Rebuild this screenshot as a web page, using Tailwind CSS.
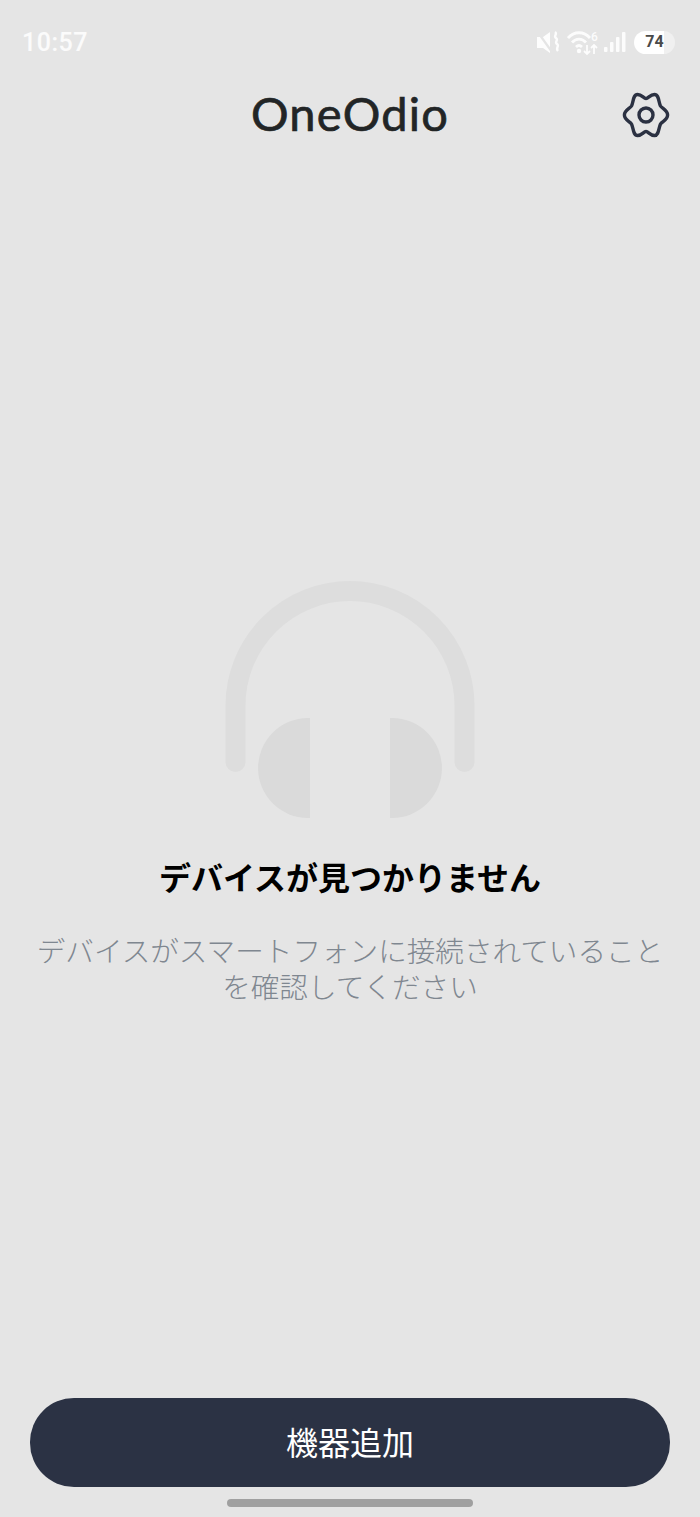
<!DOCTYPE html>
<html lang="ja">
<head>
  <meta charset="UTF-8">
  <title>OneOdio</title>
  <script src="https://cdn.jsdelivr.net/npm/@tailwindcss/browser@4"></script>
</head>
<body class="bg-[#e5e5e5]">
  <div class="w-[700px] h-[1517px] flex flex-col overflow-hidden font-['Roboto','Noto_Sans_CJK_JP',sans-serif]">

    <!-- status bar -->
    <div class="h-[84px] flex items-center justify-between pl-[22px] pr-[25px]">
      <span class="text-[25px] leading-none tracking-[0.5px] font-medium text-white/85">10:57</span>
      <div class="flex items-center">
        <svg width="24" height="24" viewBox="0 0 24 24" class="mr-[7px]">
          <path d="M1 7h6l7-5v21l-7-5H1z" fill="#fff" opacity=".9"/>
          <path d="M1 1l15 21" stroke="#e5e5e5" stroke-width="2.200"/>
          <path d="M19 2c3 2-2 4 1 6s-2 4 1 6-2 4 1 7" fill="none" stroke="#fff" stroke-width="2.400" opacity=".9"/>
        </svg>
        <svg width="32" height="26" viewBox="0 0 32 26" class="mr-[5px]">
          <g fill="none" stroke="#fff" stroke-width="2.800" opacity=".9">
            <path d="M1 9c6-7 16-7 22 0"/>
            <path d="M5 13.500c4-4.500 10-4.500 14 0"/>
            <path d="M9 18c2-2 4-2 6 0"/>
          </g>
          <circle cx="12" cy="22" r="2.200" fill="#fff" opacity=".9"/>
          <path d="M20 16v9m-3-3 3 3 3-3M27 25v-9m-3 3 3-3 3 3" fill="none" stroke="#fff" stroke-width="1.800" opacity=".9"/>
          <text x="24" y="11.500" font-size="12" font-weight="500" font-family="Roboto" fill="#fff" opacity=".9">6</text>
        </svg>
        <svg width="22" height="22" viewBox="0 0 22 22" class="mr-[8px]" fill="#fff" opacity=".9">
          <rect x="0" y="16" width="3.500" height="5" rx="1"/>
          <rect x="6" y="11" width="3.500" height="10" rx="1"/>
          <rect x="12" y="6" width="3.500" height="15" rx="1"/>
          <rect x="18" y="1" width="3.500" height="20" rx="1"/>
        </svg>
        <div class="w-[41px] h-[23px] rounded-full bg-[linear-gradient(90deg,#fff_74%,#f0f0f0_74%)] flex items-center justify-center text-[16px] font-bold text-[#4a4a4a]">74</div>
      </div>
    </div>

    <!-- header -->
    <div class="relative h-[62px] flex items-center justify-center pb-[4px]">
      <span class="font-['Lato',sans-serif] text-[47px] leading-none tracking-[1.2px] text-[#222526] [-webkit-text-stroke:0.7px_#222526]">OneOdio</span>
      <svg class="absolute right-[30px] top-[8px]" width="48" height="46" viewBox="0 0 48 46" fill="none" stroke="#2b3142" stroke-width="3.400" stroke-linejoin="round">
        <path d="M24 6.500C26.500 6.500 28 2.500 32.500 2.500C37 2.500 36.500 10 38.500 14C40 16.500 45.600 18 45.600 23C45.600 28 40 29.500 38.500 32C36.500 36 37 43.500 32.500 43.500C28 43.500 26.500 39.500 24 39.500C21.500 39.500 20 43.500 15.500 43.500C11 43.500 11.500 36 9.500 32C8 29.500 2.400 28 2.400 23C2.400 18 8 16.500 9.500 14C11.500 10 11 2.500 15.500 2.500C20 2.500 21.500 6.500 24 6.500Z"/>
        <circle cx="24" cy="23" r="7"/>
      </svg>
    </div>

    <!-- empty state -->
    <div class="flex-1 flex flex-col items-center pt-[435px]">
      <svg width="250" height="238" viewBox="225 581 250 238">
        <path d="M235.500 762V705.500a114.500 114.500 0 0 1 229 0V762" fill="none" stroke="#dddddd" stroke-width="20" stroke-linecap="round"/>
        <path d="M310 718h-2a50 50 0 0 0 0 100h2z" fill="#dadada"/>
        <path d="M390 718h2a50 50 0 0 1 0 100h-2z" fill="#dadada"/>
      </svg>
      <h2 class="mt-[38px] text-[32px] leading-[44px] font-bold text-black">デバイスが見つかりません</h2>
      <p class="mt-[33px] w-[640px] text-center text-[28.600px] leading-[36px] font-light text-[#7f8790]">デバイスがスマートフォンに接続されていることを確認してください</p>
    </div>

    <!-- bottom -->
    <div class="flex flex-col items-center pb-[10px]">
      <button class="w-[640px] h-[89px] rounded-[44px] bg-[#2b3244] text-white text-[32px] pt-[3px]">機器追加</button>
      <div class="mt-[12px] w-[246px] h-[8px] rounded-full bg-[#a0a0a0]"></div>
    </div>
  </div>
</body>
</html>
